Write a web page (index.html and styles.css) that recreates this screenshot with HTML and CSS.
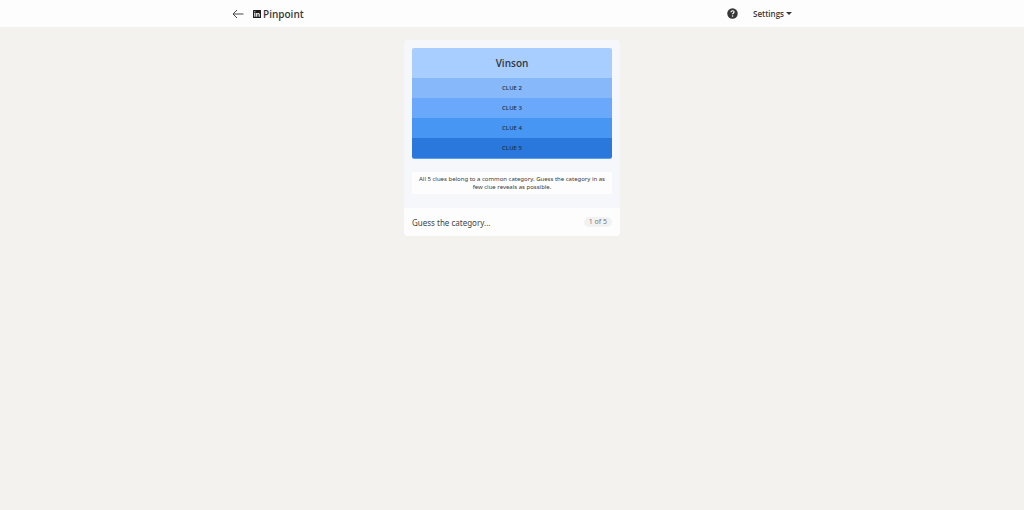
FILE: index.html
```
<!DOCTYPE html>
<html lang="en">

<head>
    <title>Pinpoint</title>
    <meta charset="utf-8">
    <meta name="viewport" content="width=device-width, initial-scale=1">
    <link rel="stylesheet" href="styles.css">
</head>

<body>
    <header class="topbar">
        <div class="topbar-inner">
            <a href="#" class="back" aria-label="Back">
                <svg width="12" height="10" viewBox="0 0 12 10">
                    <path d="M5 1L1 5l4 4M1 5h10.500" />
                </svg>
            </a>
            <h1 class="brand">
                <svg width="8" height="8" viewBox="0 0 16 16">
                    <path fill="#1c1c1c" d="M1 0h14a1 1 0 0 1 1 1v14a1 1 0 0 1-1 1H1a1 1 0 0 1-1-1V1a1 1 0 0 1 1-1z" />
                    <path fill="#fdfdfd" d="M2.500 6h2.300v7.500H2.500zM3.650 2.300a1.350 1.350 0 1 1 0 2.700 1.350 1.350 0 0 1 0-2.700zM6.300 6h2.200v1c.4-.7 1.200-1.200 2.200-1.200 2.200 0 2.800 1.400 2.800 3.500v4.200h-2.300V9.700c0-1-.2-1.900-1.200-1.900-1.100 0-1.400.8-1.400 1.900v3.800H6.300z" />
                </svg>
                Pinpoint
            </h1>
            <button type="button" class="help" aria-label="How to play">
                <svg width="11" height="11" viewBox="0 0 22 22">
                    <circle cx="11" cy="11" r="10.500" fill="#383838" />
                    <path d="M8 8.600C8 6.600 9.300 5.500 11.100 5.500S14.200 6.600 14.200 8.200c0 2.200-3.100 2.300-3.100 4.500" fill="none" stroke="#fdfdfd" stroke-width="2.400" />
                    <circle cx="11.100" cy="16" r="1.500" fill="#fdfdfd" />
                </svg>
            </button>
            <button type="button" class="settings">Settings
                <svg width="6" height="3" viewBox="0 0 6 3">
                    <path d="M0 0h6L3 3z" fill="#383838" />
                </svg>
            </button>
        </div>
    </header>

    <main class="game">
        <ol class="clues">
            <li class="clue clue1">Vinson</li>
            <li class="clue clue2">CLUE 2</li>
            <li class="clue clue3">CLUE 3</li>
            <li class="clue clue4">CLUE 4</li>
            <li class="clue clue5">CLUE 5</li>
        </ol>
        <p class="hint">All 5 clues belong to a common category. Guess the category in as few clue reveals as possible.</p>
        <form class="guess">
            <input type="text" id="guess1" aria-label="Guess the category" placeholder="Guess the category...">
            <span class="counter">1 of 5</span>
        </form>
    </main>
</body>

</html>
```
FILE: styles.css
```
* {
    box-sizing: border-box;
}

body {
    margin: 0;
    background-color: #f4f2ee;
    color: #383838;
    font-family: "Open Sans", "Noto Sans", sans-serif;
    font-size: 8px;
}

button {
    padding: 0;
    border: 0;
    background: none;
    color: inherit;
    font-family: inherit;
    cursor: pointer;
}

svg {
    display: block;
}

.topbar {
    background-color: #fdfdfd;
    padding: 0 16px;
}

.topbar-inner {
    display: flex;
    align-items: center;
    max-width: 560px;
    height: 27px;
    margin: 0 auto;
}

.back {
    margin-right: 9px;
}

.back path {
    fill: none;
    stroke: #484848;
    stroke-width: 1;
}

.brand {
    display: flex;
    align-items: center;
    gap: 2px;
    margin: 0 auto 0 0;
    font-size: 10px;
    font-weight: 600;
}

.settings {
    display: flex;
    align-items: center;
    gap: 2px;
    margin-left: 15px;
    font-size: 8px;
    font-weight: 600;
}

.game {
    max-width: 216px;
    margin: 13px auto;
    background-color: #f5f7fa;
    border-radius: 4px;
    overflow: hidden;
}

.clues {
    margin: 8px 8px 13px;
    padding: 0;
    list-style: none;
    border-bottom: 1px solid #5a9ff0;
    border-radius: 2px;
    overflow: hidden;
}

.clue {
    display: flex;
    align-items: center;
    justify-content: center;
    height: 20px;
    color: #173453;
    font-size: 6px;
    font-weight: 600;
}

.clue1 {
    height: 30px;
    background-color: #a8cdff;
    color: #303840;
    font-size: 10px;
}

.clue2 {
    background-color: #86b8fa;
}

.clue3 {
    background-color: #69a8fa;
}

.clue4 {
    background-color: #4796f4;
}

.clue5 {
    background-color: #2a78db;
}

.hint,
.guess {
    font-family: "Noto Sans", sans-serif;
}

.hint {
    margin: 0 8px 14px;
    padding: 3px 4px;
    background-color: #fdfdfd;
    border-radius: 1px;
    font-size: 6px;
    line-height: 8px;
    text-align: center;
}

.guess {
    display: flex;
    align-items: center;
    height: 28px;
    padding: 0 8px;
    background-color: #fdfdfd;
}

.guess input {
    flex: 1;
    min-width: 0;
    padding: 0;
    border: 0;
    outline: 0;
    background: none;
    color: #383838;
    font-family: inherit;
    font-size: 8px;
}

.guess input::placeholder {
    color: #444;
}

.counter {
    padding: 0 5px;
    border-radius: 5px;
    background-color: #f2f2f2;
    color: #777;
    font-size: 7px;
    line-height: 10px;
}
```
